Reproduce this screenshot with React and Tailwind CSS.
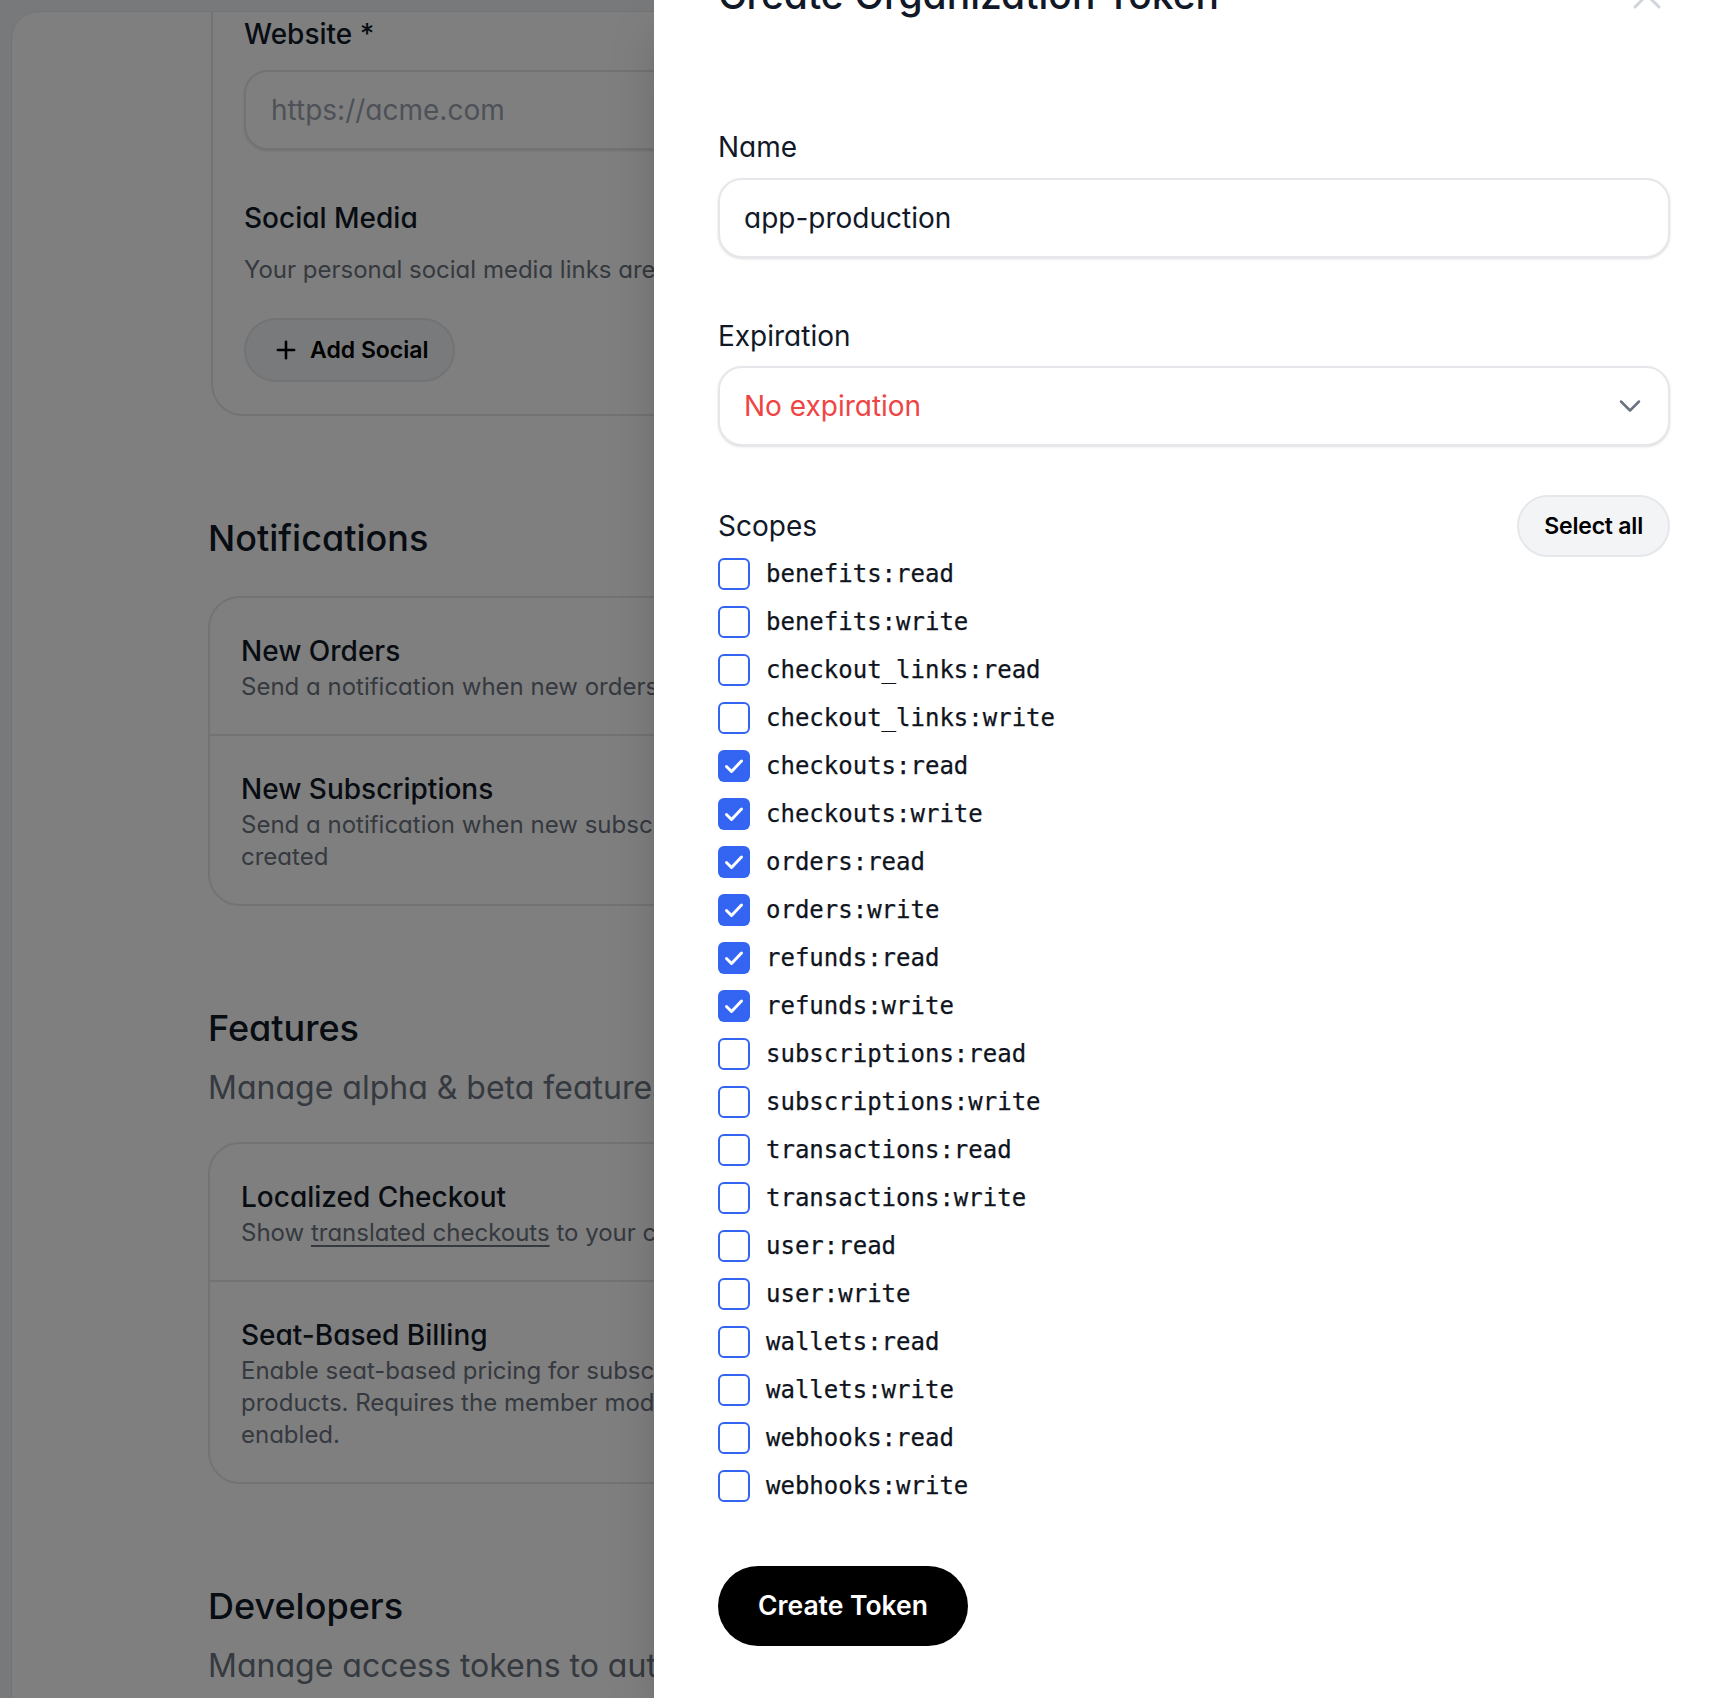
import React from "react";
import { X, ChevronDown, Plus } from "lucide-react";

const SCOPES = [
  ["benefits:read", false],
  ["benefits:write", false],
  ["checkout_links:read", false],
  ["checkout_links:write", false],
  ["checkouts:read", true],
  ["checkouts:write", true],
  ["orders:read", true],
  ["orders:write", true],
  ["refunds:read", true],
  ["refunds:write", true],
  ["subscriptions:read", false],
  ["subscriptions:write", false],
  ["transactions:read", false],
  ["transactions:write", false],
  ["user:read", false],
  ["user:write", false],
  ["wallets:read", false],
  ["wallets:write", false],
  ["webhooks:read", false],
  ["webhooks:write", false],
];

function CheckMark() {
  return (
    <svg viewBox="0 0 32 32" className="h-full w-full" fill="none" stroke="white" strokeWidth="3" strokeLinecap="round" strokeLinejoin="round">
      <path d="M8.5 16.5l5 5L23.5 11" />
    </svg>
  );
}

function ScopeRow({ name, checked }) {
  return (
    <label className="flex h-8 items-center gap-4">
      {checked ? (
        <span className="flex h-8 w-8 shrink-0 items-center justify-center rounded-[6px] bg-[#3364f2]">
          <CheckMark />
        </span>
      ) : (
        <span className="h-8 w-8 shrink-0 rounded-[6px] border-2 border-[#3364f2] bg-white" />
      )}
      <span className="font-['DejaVu_Sans_Mono',monospace] text-[24px] leading-8 text-[#0f1420] [-webkit-text-stroke:0.25px_#0f1420]">
        {name}
      </span>
    </label>
  );
}

function SettingRow({ title, children, divider }) {
  return (
    <div className={divider ? "border-b-2 border-[#e5e7eb] px-[31px] pb-[31px] pt-[33px]" : "px-[31px] pb-[31px] pt-[33px]"}>
      <div className="max-w-[570px]">
        <div className="text-[28px] font-medium leading-10 text-[#111827]">{title}</div>
        <div className="text-[24px] leading-8 text-[#6b7280]">{children}</div>
      </div>
    </div>
  );
}

function SectionHeading({ title, subtitle }) {
  return (
    <div>
      <h2 className="text-[36px] font-medium leading-[56px] text-[#111827]">{title}</h2>
      {subtitle && <p className="mt-2 text-[32px] leading-[48px] text-[#6b7280]">{subtitle}</p>}
    </div>
  );
}

function SettingsPage() {
  return (
    <div className="h-[1760px] overflow-hidden rounded-tl-[28px] border border-[#e5e7eb] bg-white pl-[196px]">
      <div className="w-[1100px]">
        {/* profile card, scrolled partly out of view */}
        <div className="-mt-[100px] ml-[3px] rounded-[32px] border-2 border-[#e5e7eb] px-[31px] pb-8 pt-[100px]">
          <div className="text-[28px] font-medium leading-10 text-[#111827]">Website *</div>
          <div className="mt-4 flex h-20 items-center rounded-[24px] border-2 border-[#e5e7eb] bg-white px-[25px] text-[28px] text-[#9ca3af] shadow-sm">
            https://acme.com
          </div>
          <div className="mt-12 text-[28px] font-medium leading-10 text-[#111827]">Social Media</div>
          <p className="mt-4 text-[24px] leading-8 text-[#6b7280]">
            Your personal social media links are shown on your public profile
          </p>
          <button className="mt-8 flex h-16 items-center gap-[10px] rounded-full border-2 border-[#e5e7eb] bg-[#f3f4f6] pl-[26px] pr-6 text-[23px] font-semibold text-black [font-feature-settings:normal]">
            <Plus size={28} strokeWidth={2.2} />
            Add Social
          </button>
        </div>

        <div className="mt-[94px]">
          <SectionHeading title="Notifications" />
          <div className="mt-[30px] rounded-[32px] border-2 border-[#e5e7eb] bg-white">
            <SettingRow title="New Orders" divider>
              Send a notification when new orders are created
            </SettingRow>
            <SettingRow title="New Subscriptions">
              Send a notification when new subscriptions are created
            </SettingRow>
          </div>
        </div>

        <div className="mt-[94px]">
          <SectionHeading title="Features" subtitle="Manage alpha & beta features for your organization" />
          <div className="mt-[30px] rounded-[32px] border-2 border-[#e5e7eb] bg-white">
            <SettingRow title="Localized Checkout" divider>
              Show <span className="underline underline-offset-4">translated checkouts</span> to your customers
            </SettingRow>
            <SettingRow title="Seat-Based Billing">
              Enable seat-based pricing for subscription products. Requires the member model to be enabled.
            </SettingRow>
          </div>
        </div>

        <div className="mt-[94px]">
          <SectionHeading title="Developers" subtitle="Manage access tokens to authenticate with the API" />
        </div>
      </div>
    </div>
  );
}

function TokenSheet() {
  return (
    <aside className="absolute right-0 top-0 flex h-full w-[1072px] flex-col bg-white pl-16 pr-[56px] shadow-2xl">
      <div className="-mt-[25px] flex h-10 items-center justify-between">
        <h1 className="text-[39px] font-medium leading-10 text-[#111827]">Create Organization Token</h1>
        <X size={48} strokeWidth={1.5} className="mr-[-1px] text-[#d1d5db]" />
      </div>

      <label className="mt-[112px] text-[28px] leading-10 text-[#111827]">Name</label>
      <div className="mt-[11px] flex h-20 items-center rounded-[24px] border-2 border-[#e5e7eb] bg-white px-[24px] text-[28px] text-[#111827] shadow-sm">
        app-production
      </div>

      <label className="mt-[58px] text-[28px] leading-10 text-[#111827]">Expiration</label>
      <div className="mt-[10px] flex h-20 items-center justify-between rounded-[24px] border-2 border-[#e5e7eb] bg-white pl-[24px] pr-5 text-[28px] text-[#ef4444] shadow-sm">
        <span>No expiration</span>
        <ChevronDown size={36} strokeWidth={1.7} className="text-[#6b7280]" />
      </div>

      <div className="mt-12 flex h-16 items-center justify-between">
        <span className="text-[28px] leading-10 text-[#111827]">Scopes</span>
        <button className="flex h-[62px] items-center rounded-full border-2 border-[#e5e7eb] bg-[#f3f4f6] px-[25px] text-[23px] font-semibold tracking-[-0.2px] text-black [font-feature-settings:normal]">
          Select all
        </button>
      </div>

      <div className="flex flex-col gap-4">
        {SCOPES.map(([name, checked]) => (
          <ScopeRow key={name} name={name} checked={checked} />
        ))}
      </div>

      <div className="mt-16">
        <button className="flex h-20 items-center rounded-full bg-black px-10 text-[26.5px] font-semibold text-white [font-feature-settings:normal]">
          Create Token
        </button>
      </div>
    </aside>
  );
}

export default function App() {
  return (
    <div className="relative h-[1698px] w-[1726px] overflow-hidden bg-[#f1f2f5] pl-[11px] pt-[11px] font-['Inter',sans-serif] [font-feature-settings:'cv11']">
      <SettingsPage />
      <div className="absolute inset-0 bg-black/50" />
      <TokenSheet />
    </div>
  );
}
